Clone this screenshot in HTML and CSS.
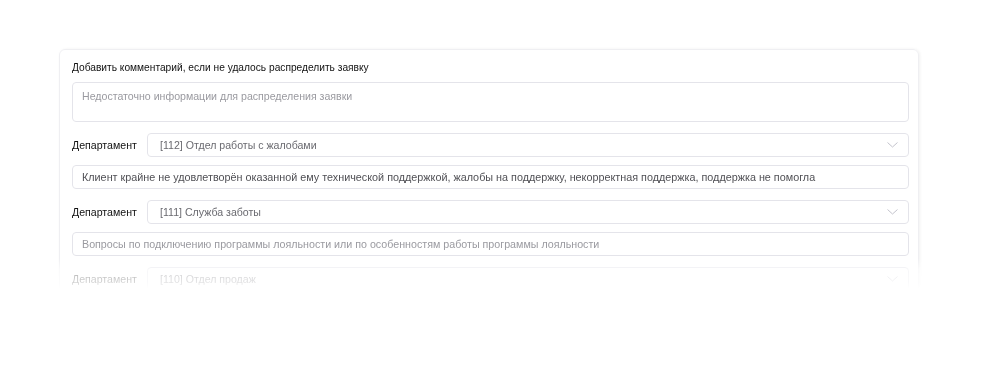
FILE: index.html
```html
<!doctype html>
<html lang="ru">
<head>
<meta charset="UTF-8">
<title>Распределение заявки</title>
<link rel="stylesheet" href="styles.css">
</head>
<body>
	<div class="wrap">
		<div class="card">
			<div class="title">Добавить комментарий, если не удалось распределить заявку</div>
			<div class="area placeholder">Недостаточно информации для распределения заявки</div>

			<!-- группа: департамент + описание -->
			<div class="group">
				<div class="row">
					<div class="label">Департамент</div>
					<div class="select">
						<span>[112] Отдел работы с жалобами</span>
						<svg class="chev" width="11" height="6" viewBox="0 0 11 6"><path d="M0.5 0.5 L5.5 5 L10.5 0.5" fill="none" stroke="#c4c4cc" stroke-width="1"/></svg>
					</div>
				</div>
				<div class="field">Клиент крайне не удовлетворён оказанной ему технической поддержкой, жалобы на поддержку, некорректная поддержка, поддержка не помогла</div>
			</div>

			<div class="group">
				<div class="row">
					<div class="label">Департамент</div>
					<div class="select">
						<span>[111] Служба заботы</span>
						<svg class="chev" width="11" height="6" viewBox="0 0 11 6"><path d="M0.5 0.5 L5.5 5 L10.5 0.5" fill="none" stroke="#c4c4cc" stroke-width="1"/></svg>
					</div>
				</div>
				<div class="field placeholder">Вопросы по подключению программы лояльности или по особенностям работы программы лояльности</div>
			</div>

			<div class="group">
				<div class="row">
					<div class="label">Департамент</div>
					<div class="select">
						<span>[110] Отдел продаж</span>
						<svg class="chev" width="11" height="6" viewBox="0 0 11 6"><path d="M0.5 0.5 L5.5 5 L10.5 0.5" fill="none" stroke="#c4c4cc" stroke-width="1"/></svg>
					</div>
				</div>
			</div>
		</div>
	</div>
</body>
</html>
```

FILE: styles.css
```css
body{
	margin:0;
	background:#ffffff;
	font-family:"Liberation Sans", Arial, sans-serif;
	font-size:10.6px;
	color:#111111;
}
.wrap{
	padding:49px 69px 0 59px;
	height:240px;
	overflow:hidden;
	-webkit-mask-image:linear-gradient(to bottom, #000 0, #000 258px, rgba(0,0,0,0.3) 270px, rgba(0,0,0,0.2) 282px, transparent 289px);
	mask-image:linear-gradient(to bottom, #000 0, #000 258px, rgba(0,0,0,0.3) 270px, rgba(0,0,0,0.2) 282px, transparent 289px);
}
.card{
	border:1px solid #efeff2;
	border-radius:6px;
	box-shadow:1px 0 3px rgba(0,0,0,0.06);
	padding:11px 9px 20px 12px;
}
.title{
	font-size:10.2px;
	line-height:14px;
	margin-bottom:7px;
}
.area{
	height:24px;
	padding:6px 9px 8px;
	line-height:14px;
	border:1px solid #e4e4ea;
	border-radius:4px;
	margin-bottom:11px;
}
.placeholder{
	color:#9a9aa0 !important;
}
.group{
	margin-bottom:11px;
}
.row{
	display:flex;
	align-items:center;
	margin-bottom:8px;
}
.label{
	width:75px;
	flex:none;
}
.select{
	flex:1;
	height:22px;
	border:1px solid #e4e4ea;
	border-radius:4px;
	display:flex;
	align-items:center;
	justify-content:space-between;
	padding:0 10px 0 12px;
	color:#6a6a70;
}
.chev{
	display:block;
}
.field{
	height:22px;
	line-height:22px;
	border:1px solid #e4e4ea;
	border-radius:4px;
	padding:0 9px;
	font-size:10.8px;
	color:#505055;
	white-space:nowrap;
	overflow:hidden;
}
.field.placeholder{
	font-size:10.7px;
}
```
